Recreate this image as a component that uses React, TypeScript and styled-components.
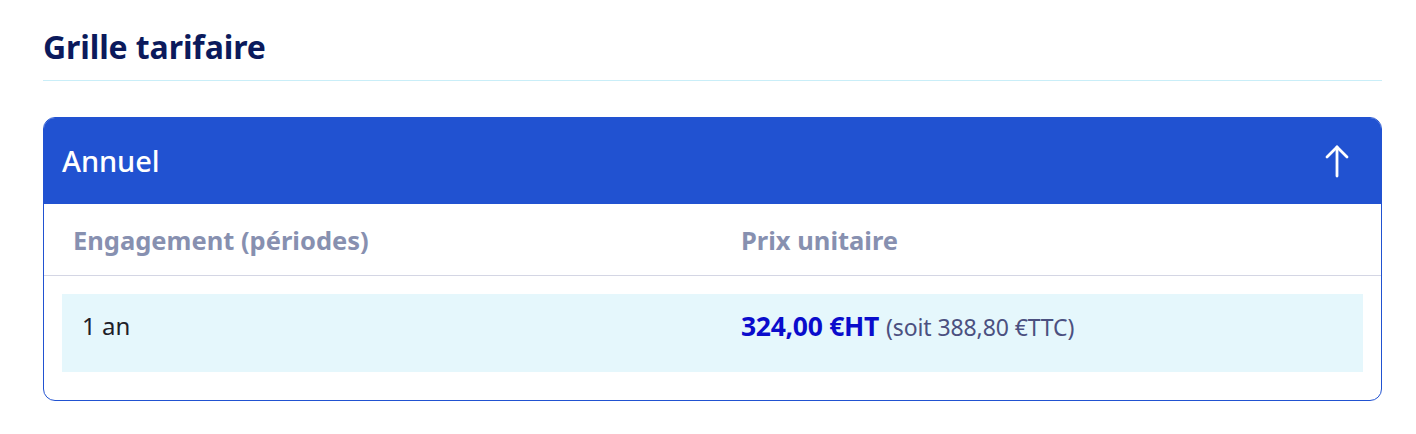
import React from "react";
import styled, { createGlobalStyle } from "styled-components";

const GlobalStyle = createGlobalStyle`
  html, body { margin: 0; padding: 0; background: #ffffff; }
  body { font-family: "Noto Sans", "Open Sans", sans-serif; }
  * { box-sizing: border-box; }
`;

const Page = styled.div`
  padding: 24px 34px 0 43px;
  width: 1416px;
`;

const Title = styled.h2`
  margin: 0;
  font-size: 32px;
  font-weight: 700;
  line-height: 46px;
  color: #0b1a5c;
  letter-spacing: -0.1px;
`;

const Divider = styled.hr`
  margin: 10px 0 36px;
  border: none;
  border-top: 1px solid #c9eef8;
`;

const Card = styled.section`
  border: 1px solid #2152d1;
  border-radius: 12px;
  overflow: hidden;
  padding-bottom: 28px;
`;

const CardHeader = styled.div`
  height: 87px;
  background: #2152d1;
  display: flex;
  align-items: center;
  justify-content: space-between;
  padding: 0 33px 0 19px;
  margin: -1px -1px 0;
  color: #ffffff;
`;

const CardTitle = styled.span`
  font-size: 29px;
  font-weight: 500;
  letter-spacing: -0.1px;
`;

const HeadRow = styled.div`
  display: grid;
  grid-template-columns: 668px 1fr;
  height: 72px;
  align-items: center;
  padding-left: 29px;
  border-bottom: 1px solid #d4d6e4;
`;

const HeadCell = styled.span`
  font-size: 25.5px;
  font-weight: 700;
  color: #8790b0;
  letter-spacing: 0;
`;

const DataRow = styled.div`
  display: grid;
  grid-template-columns: 659px 1fr;
  margin: 18px 18px 0;
  height: 78px;
  padding: 16px 0 0 20px;
  background: #e5f7fc;
  align-items: start;
`;

const Cell = styled.span`
  font-size: 24px;
  line-height: 32px;
  color: #1e2028;
`;

const Price = styled.span`
  font-size: 26.5px;
  font-weight: 700;
  color: #0a0ccc;
  letter-spacing: -0.3px;
`;

const PriceNote = styled.span`
  font-size: 23px;
  color: #4b5080;
  margin-left: 7px;
  letter-spacing: -0.1px;
`;

const ArrowIcon = () => (
  <svg width="24" height="34" viewBox="0 0 24 34" fill="none" stroke="#ffffff" strokeWidth="2.8" strokeLinecap="round" strokeLinejoin="round">
    <path d="M12 3 V32" />
    <path d="M2 13 L12 3 L22 13" />
  </svg>
);

export default function App() {
  return (
    <Page>
      <GlobalStyle />
      <Title>Grille tarifaire</Title>
      <Divider />
      <Card>
        <CardHeader>
          <CardTitle>Annuel</CardTitle>
          <ArrowIcon />
        </CardHeader>
        <HeadRow>
          <HeadCell>Engagement (périodes)</HeadCell>
          <HeadCell>Prix unitaire</HeadCell>
        </HeadRow>
        <DataRow>
          <Cell>1 an</Cell>
          <Cell>
            <Price>324,00 €HT</Price>
            <PriceNote>(soit 388,80 €TTC)</PriceNote>
          </Cell>
        </DataRow>
      </Card>
    </Page>
  );
}
